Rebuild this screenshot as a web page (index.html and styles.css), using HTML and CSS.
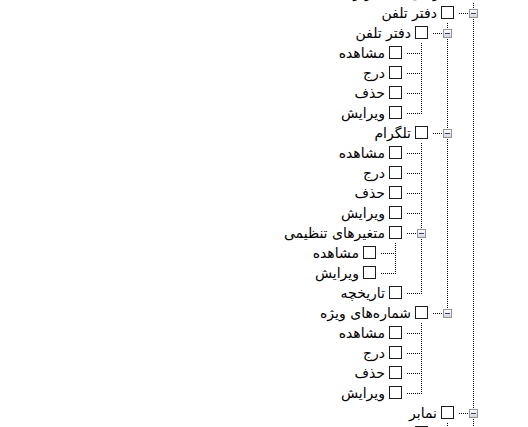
FILE: index.html
```html
<!DOCTYPE html>
<html lang="fa" dir="rtl">
<head>
  <meta charset="UTF-8">
  <title>دسترسی‌ها</title>
  <link rel="stylesheet" href="styles.css">
</head>
<body>
  <div class="tree">
    <ul class="branch">
      <li class="node">
        <div class="row"><span class="conn open"><span class="hline"></span><span class="toggle"></span></span><span class="check"></span><span class="label">دسترسی‌های کاربر</span></div>
        <ul class="branch">
          <li class="node">
            <div class="row"><span class="conn open"><span class="hline"></span><span class="toggle"></span></span><span class="check"></span><span class="label">دفتر تلفن</span></div>
            <ul class="branch">
              <li class="node">
                <div class="row"><span class="conn open"><span class="hline"></span><span class="toggle"></span></span><span class="check"></span><span class="label">دفتر تلفن</span></div>
                <ul class="branch">
                  <li class="node"><div class="row"><span class="conn"><span class="hline"></span></span><span class="check"></span><span class="label">مشاهده</span></div></li>
                  <li class="node"><div class="row"><span class="conn"><span class="hline"></span></span><span class="check"></span><span class="label">درج</span></div></li>
                  <li class="node"><div class="row"><span class="conn"><span class="hline"></span></span><span class="check"></span><span class="label">حذف</span></div></li>
                  <li class="node"><div class="row"><span class="conn"><span class="hline"></span></span><span class="check"></span><span class="label">ویرایش</span></div></li>
                </ul>
              </li>
              <li class="node">
                <div class="row"><span class="conn open"><span class="hline"></span><span class="toggle"></span></span><span class="check"></span><span class="label">تلگرام</span></div>
                <ul class="branch">
                  <li class="node"><div class="row"><span class="conn"><span class="hline"></span></span><span class="check"></span><span class="label">مشاهده</span></div></li>
                  <li class="node"><div class="row"><span class="conn"><span class="hline"></span></span><span class="check"></span><span class="label">درج</span></div></li>
                  <li class="node"><div class="row"><span class="conn"><span class="hline"></span></span><span class="check"></span><span class="label">حذف</span></div></li>
                  <li class="node"><div class="row"><span class="conn"><span class="hline"></span></span><span class="check"></span><span class="label">ویرایش</span></div></li>
                  <li class="node">
                    <div class="row"><span class="conn open"><span class="hline"></span><span class="toggle"></span></span><span class="check"></span><span class="label">متغیرهای تنظیمی</span></div>
                    <ul class="branch">
                      <li class="node"><div class="row"><span class="conn"><span class="hline"></span></span><span class="check"></span><span class="label">مشاهده</span></div></li>
                      <li class="node"><div class="row"><span class="conn"><span class="hline"></span></span><span class="check"></span><span class="label">ویرایش</span></div></li>
                    </ul>
                  </li>
                  <li class="node"><div class="row"><span class="conn"><span class="hline"></span></span><span class="check"></span><span class="label">تاریخچه</span></div></li>
                </ul>
              </li>
              <li class="node">
                <div class="row"><span class="conn open"><span class="hline"></span><span class="toggle"></span></span><span class="check"></span><span class="label">شماره‌های ویژه</span></div>
                <ul class="branch">
                  <li class="node"><div class="row"><span class="conn"><span class="hline"></span></span><span class="check"></span><span class="label">مشاهده</span></div></li>
                  <li class="node"><div class="row"><span class="conn"><span class="hline"></span></span><span class="check"></span><span class="label">درج</span></div></li>
                  <li class="node"><div class="row"><span class="conn"><span class="hline"></span></span><span class="check"></span><span class="label">حذف</span></div></li>
                  <li class="node"><div class="row"><span class="conn"><span class="hline"></span></span><span class="check"></span><span class="label">ویرایش</span></div></li>
                </ul>
              </li>
            </ul>
          </li>
          <li class="node">
            <div class="row"><span class="conn open"><span class="hline"></span><span class="toggle"></span></span><span class="check"></span><span class="label">نمابر</span></div>
            <ul class="branch">
              <li class="node"><div class="row"><span class="conn"><span class="hline"></span></span><span class="check"></span><span class="label">مشاهده</span></div></li>
              <li class="node"><div class="row"><span class="conn"><span class="hline"></span></span><span class="check"></span><span class="label">ارسال</span></div></li>
            </ul>
          </li>
          <li class="node">
            <div class="row"><span class="conn"><span class="hline"></span></span><span class="check"></span><span class="label">پیامک</span></div>
          </li>
        </ul>
      </li>
    </ul>
  </div>
</body>
</html>
```

FILE: styles.css
```css
:root {
  --line: #000000;
  --check-border: #1c1c1c;
  --toggle-border: #949494;
  --toggle-sign: #2b3f8f;
  --text: #000000;
  --background: #FFFFFF;
}

body {
  margin: 0;
  direction: rtl;
  font-family: "DejaVu Sans", sans-serif;
  font-size: 14px;
  color: var(--text);
  background: var(--background);
  overflow: hidden;
}

.tree {
  margin: -17px 23px 0 0;
}

.branch {
  list-style: none;
  margin: 0;
  padding: 0;
}

.node > .branch {
  padding-right: 26px;
}

/* vertical dotted line through siblings */
.node:not(:last-child) {
  background: repeating-linear-gradient(to bottom, var(--line) 0 1px, transparent 1px 2px) right 5px top / 1px 100% no-repeat;
}

.row {
  display: flex;
  align-items: flex-start;
  height: 20px;
}

.conn {
  flex: none;
  width: 20px;
  height: 20px;
  display: flex;
  align-items: flex-start;
  direction: ltr;
}

.node:last-child > .row > .conn {
  background: repeating-linear-gradient(to bottom, var(--line) 0 1px, transparent 1px 2px) 14px 0 / 1px 11px no-repeat;
}

.hline {
  width: 15px;
  height: 1px;
  margin-top: 10px;
  background: repeating-linear-gradient(to right, var(--line) 0 1px, transparent 1px 2px);
}

.conn.open .hline {
  width: 10px;
}

.toggle {
  width: 9px;
  height: 9px;
  margin-top: 6px;
  box-sizing: border-box;
  border: 1px solid var(--toggle-border);
  background: linear-gradient(#ffffff, #d6d6d6);
  display: flex;
  align-items: center;
  justify-content: center;
}

.toggle::after {
  content: '';
  width: 5px;
  height: 1px;
  background: var(--toggle-sign);
}

.check {
  flex: none;
  width: 13px;
  height: 13px;
  margin: 3px 5px 0 0;
  box-sizing: border-box;
  border: 1px solid var(--check-border);
  background: #fff;
}

.label {
  margin-right: 4px;
  line-height: 20px;
  white-space: nowrap;
}
```
